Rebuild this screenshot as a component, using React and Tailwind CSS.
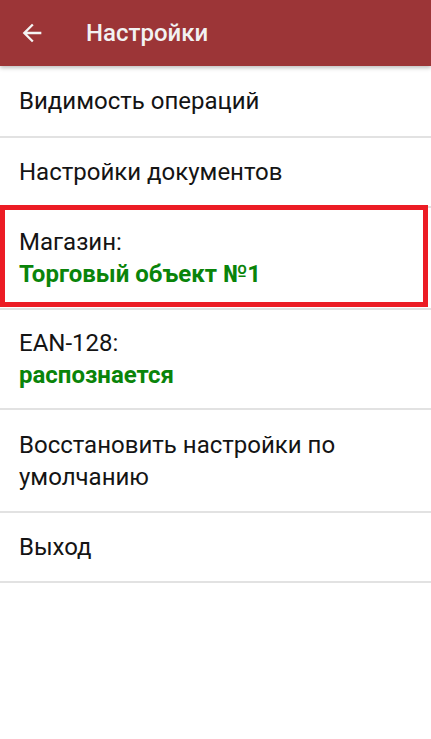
import React from 'react';

const Row = ({ children, boxed }) => (
  <div className="relative border-b-2 border-[#e2e2e2]">
    {boxed && (
      <div className="absolute left-0 right-[3px] top-[-3px] bottom-[1px] border-[5px] border-[#ec1c24] pointer-events-none" />
    )}
    {children}
  </div>
);

const App = () => {
  return (
    <div className="w-[431px] h-[739px] bg-white overflow-hidden" style={{ fontFamily: 'Roboto, "Noto Sans", sans-serif' }}>
      <div className="relative z-10 h-[66px] bg-[#9c3537] flex items-center shadow-[0_2px_4px_rgba(0,0,0,0.25)]">
        <svg viewBox="0 0 24 24" className="ml-[18px] w-[28px] h-[28px]" fill="#f4f4f4">
          <path d="M20 11H7.83l5.59-5.59L12 4l-8 8 8 8 1.41-1.41L7.83 13H20v-2z" />
        </svg>
        <h1 className="ml-[40px] text-[24px] font-medium text-[#f2f2f2]">Настройки</h1>
      </div>

      <div className="text-[24px] text-[#141414] leading-[32px]">
        <Row>
          <div className="h-[70px] flex items-center px-[19px]">Видимость операций</div>
        </Row>
        <Row>
          <div className="h-[68px] flex items-center px-[19px]">Настройки документов</div>
        </Row>
        <Row boxed>
          <div className="h-[100px] flex flex-col justify-center px-[19px]">
            <span>Магазин:</span>
            <span className="font-bold text-[#0a840a]">Торговый объект №1</span>
          </div>
        </Row>
        <Row>
          <div className="h-[98px] flex flex-col justify-center px-[19px]">
            <span>EAN-128:</span>
            <span className="font-bold text-[#0a840a]">распознается</span>
          </div>
        </Row>
        <Row>
          <div className="h-[101px] flex flex-col justify-center px-[19px]">
            <span>Восстановить настройки по</span>
            <span>умолчанию</span>
          </div>
        </Row>
        <Row>
          <div className="h-[68px] flex items-center px-[19px]">Выход</div>
        </Row>
      </div>
    </div>
  );
};

export default App;
